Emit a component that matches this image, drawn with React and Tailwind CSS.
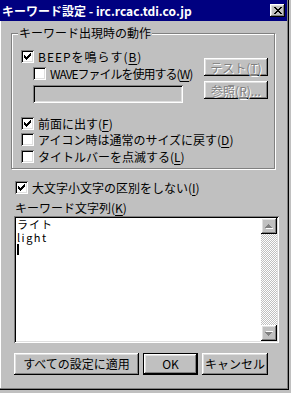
import React from 'react';

// Win95-style bevels
const RAISED = 'shadow-[inset_-1px_-1px_#000,inset_1px_1px_#fff,inset_-2px_-2px_#808080,inset_2px_2px_#dfdfdf]';
const SUNKEN = 'shadow-[inset_1px_1px_#808080,inset_-1px_-1px_#fff,inset_2px_2px_#000,inset_-2px_-2px_#dfdfdf]';
const DISABLED_TEXT = 'text-[#808080] [text-shadow:1px_1px_0_#fff]';

const CheckMark = () => (
  <svg width="7" height="7" viewBox="0 0 7 7" shapeRendering="crispEdges">
    <path
      fill="#000"
      d="M0 2h1v3h-1z M1 3h1v3h-1z M2 4h1v3h-1z M3 3h1v3h-1z M4 2h1v3h-1z M5 1h1v3h-1z M6 0h1v3h-1z"
    />
  </svg>
);

const CloseX = () => (
  <svg width="8" height="7" viewBox="0 0 8 7" shapeRendering="crispEdges">
    <path
      fill="#000"
      d="M0 0h2v1h-2z M6 0h2v1h-2z M1 1h2v1h-2z M5 1h2v1h-2z M2 2h4v1h-4z M3 3h2v1h-2z M2 4h4v1h-4z M1 5h2v1h-2z M5 5h2v1h-2z M0 6h2v1h-2z M6 6h2v1h-2z"
    />
  </svg>
);

const Arrow = ({ down }) => (
  <svg width="8" height="5" viewBox="0 0 8 5" shapeRendering="crispEdges">
    <g transform={down ? 'translate(0 5) scale(1 -1)' : undefined}>
      <path fill="#fff" d="M4 1h1v1h1v1h1v1h1v1h-7z" />
      <path fill="#808080" d="M3 0h1v1h1v1h1v1h1v1h-7v-1h1v-1h1v-1h1z" />
    </g>
  </svg>
);

const CheckBox = ({ checked }) => (
  <div className={`w-[13px] h-[13px] shrink-0 bg-white flex items-center justify-center ${SUNKEN}`}>
    {checked && <CheckMark />}
  </div>
);

const CheckRow = ({ checked, children, className = '', textClass = '' }) => (
  <div className={`flex items-center gap-[4px] h-[13px] ${className}`}>
    <CheckBox checked={checked} />
    <span className={`leading-[13px] whitespace-nowrap ${textClass}`}>{children}</span>
  </div>
);

const U = ({ children }) => <span className="underline underline-offset-[2px]">{children}</span>;

export default function App() {
  return (
    <div className="w-[291px] h-[393px] bg-[#c0c0c0] text-[12px] text-black font-['Noto_Sans_CJK_JP','Noto_Sans_CJK_SC',sans-serif] overflow-hidden">
      <div className="w-[289px] h-[390px] flex flex-col shadow-[inset_-1px_-1px_#000,inset_-2px_-2px_#808080,inset_1px_0_#fff]">
        {/* title bar */}
        <div className="h-[21px] w-[287px] bg-[#000080] flex items-center justify-between pl-[2px] pr-[2px]">
          <span className="text-white font-bold leading-[14px] whitespace-nowrap">キーワード設定 - irc.rcac.tdi.co.jp</span>
          <div className={`w-[15px] h-[13px] bg-[#c0c0c0] flex items-center justify-center ${RAISED}`}>
            <CloseX />
          </div>
        </div>

        <div className="pl-[11px] flex flex-col">
          {/* group box */}
          <div className="relative mt-[12px] w-[264px] h-[136px] border border-[#808080] shadow-[inset_1px_1px_#fff,1px_1px_#fff]">
            <span className="absolute left-[6px] top-[-8px] px-[1px] bg-[#c0c0c0] leading-[14px] whitespace-nowrap">
              キーワード出現時の動作
            </span>

            <div className="flex">
              <div className="flex-1 pl-[9px] pt-[16px] flex flex-col">
                <CheckRow checked textClass="tracking-[1px]">BEEPを鳴らす(<U>B</U>)</CheckRow>
                <CheckRow className="mt-[4px] ml-[12px]" textClass="tracking-[-1px]">
                  WAVEファイルを使用する(<U>W</U>)
                </CheckRow>
                <div className={`mt-[5px] ml-[12px] w-[150px] h-[18px] bg-[#c0c0c0] ${SUNKEN}`} />
              </div>
              <div className="w-[64px] mr-[6px] pt-[24px] flex flex-col gap-[5px]">
                <div className={`h-[18px] flex items-center justify-center leading-[13px] ${RAISED} ${DISABLED_TEXT}`}>
                  テスト(<U>T</U>)
                </div>
                <div className={`h-[18px] flex items-center justify-center leading-[13px] ${RAISED} ${DISABLED_TEXT}`}>
                  参照(<U>R</U>)...
                </div>
              </div>
            </div>

            <div className="pl-[9px] flex flex-col">
              <CheckRow checked className="mt-[14px]">前面に出す(<U>F</U>)</CheckRow>
              <CheckRow className="mt-[3px]">アイコン時は通常のサイズに戻す(<U>D</U>)</CheckRow>
              <CheckRow className="mt-[4px]">タイトルバーを点滅する(<U>L</U>)</CheckRow>
            </div>
          </div>

          <CheckRow checked className="mt-[12px] ml-[4px]">大文字小文字の区別をしない(<U>I</U>)</CheckRow>

          <span className="mt-[7px] ml-[4px] leading-[14px]">キーワード文字列(<U>K</U>)</span>

          {/* keyword list */}
          <div className={`mt-[1px] ml-[3px] w-[265px] h-[127px] bg-white flex p-[2px] ${SUNKEN}`}>
            <div className="flex-1 pl-[1px] flex flex-col text-[11px]">
              <div className="h-[13px] leading-[13px] tracking-[1px]">ライト</div>
              <div className="h-[13px] leading-[13px] tracking-[1.5px]">light</div>
              <div className="w-[2px] h-[11px] bg-black" />
            </div>
            <div className="w-[16px] flex flex-col">
              <div className={`h-[16px] bg-[#c0c0c0] flex items-center justify-center ${RAISED}`}>
                <Arrow />
              </div>
              <div className="flex-1 bg-[repeating-conic-gradient(#fff_0%_25%,#c0c0c0_0%_50%)] bg-[length:2px_2px]" />
              <div className={`h-[16px] bg-[#c0c0c0] flex items-center justify-center ${RAISED}`}>
                <Arrow down />
              </div>
            </div>
          </div>

          {/* buttons */}
          <div className="mt-[10px] ml-[3px] flex gap-[4px]">
            <div className={`w-[125px] h-[22px] flex items-center justify-center ${RAISED}`}>すべての設定に適用</div>
            <div className="w-[55px] h-[22px] border border-black">
              <div className={`w-full h-full flex items-center justify-center ${RAISED}`}>OK</div>
            </div>
            <div className={`w-[66px] h-[22px] flex items-center justify-center ${RAISED}`}>キャンセル</div>
          </div>
        </div>
      </div>
    </div>
  );
}
